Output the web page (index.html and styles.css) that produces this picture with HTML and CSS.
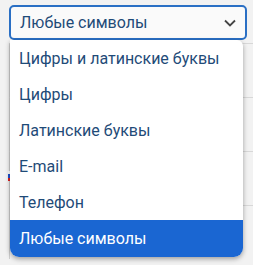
FILE: index.html
```html
<!DOCTYPE html>
<html lang="ru">
<head>
    <meta charset="UTF-8">
    <meta name="viewport" content="width=device-width, initial-scale=1.0">
    <title>Тип поля</title>
    <link rel="stylesheet" href="styles.css">
</head>
<body>
    <div class="backdrop">
        <div class="backdrop-row"></div>
        <div class="backdrop-row"></div>
        <div class="backdrop-row"><span class="flag"></span></div>
        <div class="backdrop-row"></div>
    </div>

    <div class="picker">
        <div class="select">
            <span class="select-value">Любые символы</span>
            <svg class="chevron" width="12" height="8" viewBox="0 0 12 8">
                <path d="M1 1.5 L6 6.5 L11 1.5" fill="none" stroke="#444" stroke-width="1.8"/>
            </svg>
        </div>

        <ul class="options">
            <li class="option">Цифры и латинские буквы</li>
            <li class="option">Цифры</li>
            <li class="option">Латинские буквы</li>
            <li class="option">E-mail</li>
            <li class="option">Телефон</li>
            <li class="option selected">Любые символы</li>
        </ul>
    </div>
</body>
</html>
```

FILE: styles.css
```css
/* Page */
body {
    margin: 0;
    background-color: #f2f2f2;
    font-family: Roboto, "Noto Sans", sans-serif;
    width: 253px;
    height: 265px;
    overflow: hidden;
    position: relative;
}

/* Faded form rows behind the dropdown */
.backdrop {
    position: absolute;
    left: 0;
    top: 43px;
    width: 253px;
}

.backdrop-row {
    height: 53px;
    border-top: 1px solid #d8d8d8;
    border-left: 1px solid #cfcfcf;
    margin-left: 9px;
    position: relative;
}

.flag {
    position: absolute;
    left: -2px;
    top: 19px;
    width: 3px;
    height: 10px;
    background: linear-gradient(#ffffff 0 33%, #1f4fd0 33% 66%, #e02020 66%);
}

/* Select box */
.picker {
    position: relative;
    padding: 5px 6px 0 9px;
}

.select {
    display: flex;
    align-items: center;
    justify-content: space-between;
    height: 31px;
    padding: 0 8px 0 9px;
    border: 2px solid #2a6fc4;
    border-radius: 5px;
    background-color: #fafafa;
    color: #1f4b78;
    font-size: 16px;
}

.chevron {
    margin-right: 1px;
}

/* Options list */
.options {
    list-style: none;
    margin: 0 1px;
    padding: 0;
    width: 233px;
    background-color: #ffffff;
    border-radius: 0 6px 9px 9px;
    box-shadow: 0 2px 5px rgba(0, 0, 0, 0.35);
    overflow: hidden;
}

.option {
    height: 36px;
    line-height: 37px;
    padding-left: 9px;
    font-size: 16px;
    color: #1f4b78;
    white-space: nowrap;
}

.option.selected {
    height: 37px;
    background-color: #1a66d2;
    color: #ffffff;
}
```
